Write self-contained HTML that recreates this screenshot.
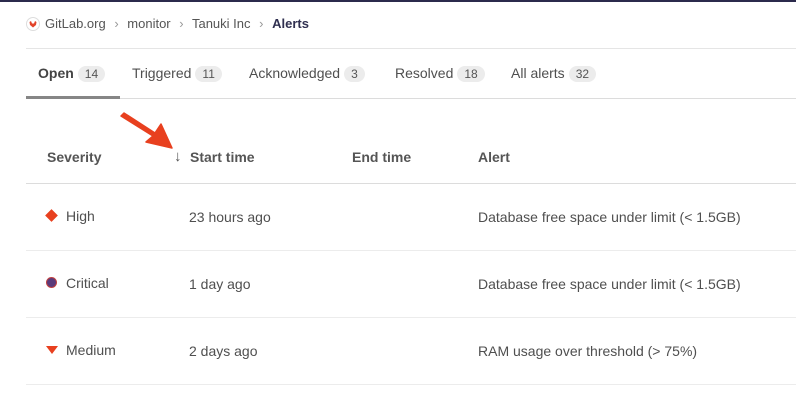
<!DOCTYPE html>
<html><head><style>
*{margin:0;padding:0;box-sizing:border-box}
body{width:796px;height:407px;background:#fff;font-family:"Liberation Sans",sans-serif;color:#4f4f4f;position:relative;overflow:hidden;font-size:14px}
.a{position:absolute;white-space:nowrap}
.line{position:absolute;left:26px;right:0;height:1px;background:#e5e5e5}
.bd{display:inline-block;background:#ececec;border-radius:9px;padding:1px 7px;font-size:12px;color:#555;margin-left:4px}
.h{font-weight:bold;color:#555}
</style></head><body>
<div class="a" style="left:0;top:0;width:796px;height:2px;background:#2b2a4c"></div>
<svg class="a" style="left:26px;top:17px" width="14" height="14" viewBox="0 0 14 14"><circle cx="7" cy="7" r="6.5" fill="#fff" stroke="#ddd"/><path d="M3.5 5 L5 4 L6 6.5 H8 L9 4 L10.5 5 L10 8 L7 10.5 L4 8Z" fill="#e24329"/></svg>
<div class="a" style="left:45px;top:16px;font-size:13px;color:#555">GitLab.org <span style="color:#999;margin:0 5px">›</span> monitor <span style="color:#999;margin:0 5px">›</span> Tanuki Inc <span style="color:#999;margin:0 5px">›</span> <b style="color:#303050">Alerts</b></div>
<div class="line" style="top:48px"></div>
<div class="a" style="left:38px;top:65px"><b style="color:#444">Open</b><span class="bd">14</span></div>
<div class="a" style="left:132px;top:65px">Triggered<span class="bd">11</span></div>
<div class="a" style="left:249px;top:65px">Acknowledged<span class="bd">3</span></div>
<div class="a" style="left:395px;top:65px">Resolved<span class="bd">18</span></div>
<div class="a" style="left:511px;top:65px">All alerts<span class="bd">32</span></div>
<div class="line" style="top:98px;background:#dcdcdc"></div>
<div class="a" style="left:26px;top:96px;width:94px;height:3px;background:#868686"></div>
<svg class="a" style="left:0;top:0" width="796" height="407" viewBox="0 0 796 407"><path d="M121 116 L124 113 L155 133 L161 124 L172 148 L146 142 L153 136 Z" fill="#e8401f" stroke="#e8401f" stroke-width="1.5" stroke-linejoin="round"/></svg>
<div class="a h" style="left:47px;top:149px">Severity</div>
<div class="a h" style="left:174px;top:148px;font-size:15px;font-weight:normal">↓</div>
<div class="a h" style="left:190px;top:149px">Start time</div>
<div class="a h" style="left:352px;top:149px">End time</div>
<div class="a h" style="left:478px;top:149px">Alert</div>
<div class="line" style="top:183px;background:#dcdcdc"></div>
<div class="a" style="left:47px;top:211px;width:9px;height:9px;background:#e8401f;transform:rotate(45deg)"></div>
<div class="a" style="left:66px;top:208px">High</div>
<div class="a" style="left:189px;top:209px">23 hours ago</div>
<div class="a" style="left:478px;top:209px">Database free space under limit (&lt; 1.5GB)</div>
<div class="line" style="top:250px;background:#ececec"></div>
<div class="a" style="left:46px;top:277px;width:11px;height:11px;border-radius:50%;background:#5a3a7a;border:1px solid #c04040"></div>
<div class="a" style="left:66px;top:275px">Critical</div>
<div class="a" style="left:189px;top:276px">1 day ago</div>
<div class="a" style="left:478px;top:276px">Database free space under limit (&lt; 1.5GB)</div>
<div class="line" style="top:317px;background:#ececec"></div>
<svg class="a" style="left:46px;top:346px" width="12" height="9" viewBox="0 0 12 9"><path d="M0 0 H12 L6 8Z" fill="#e8401f"/></svg>
<div class="a" style="left:66px;top:342px">Medium</div>
<div class="a" style="left:189px;top:343px">2 days ago</div>
<div class="a" style="left:478px;top:343px">RAM usage over threshold (&gt; 75%)</div>
<div class="line" style="top:384px;background:#ececec"></div>
</body></html>
